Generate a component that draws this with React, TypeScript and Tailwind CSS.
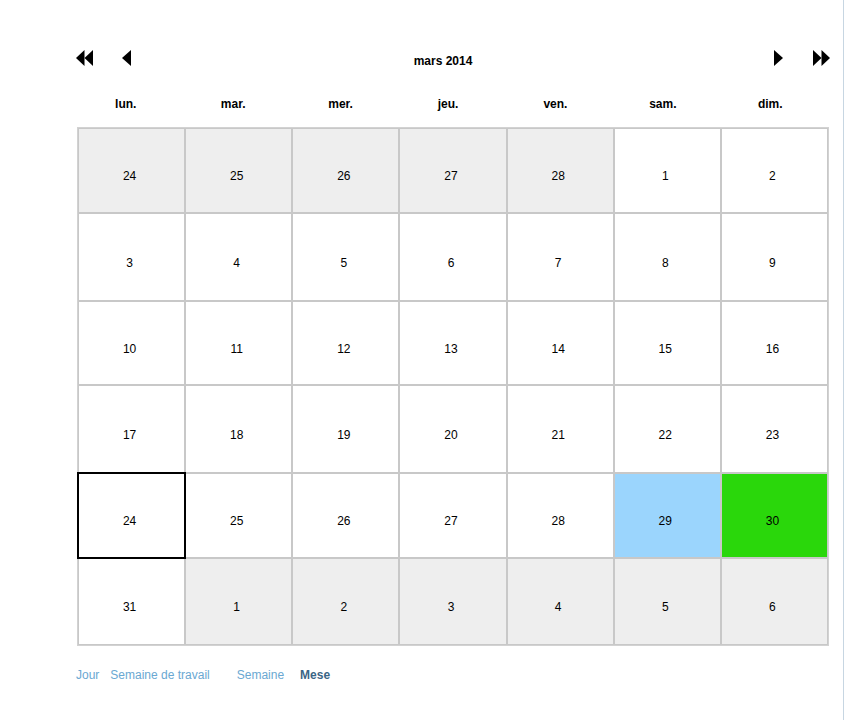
import React from 'react';

// ---------------------------------------------------------------------------
// Data
// ---------------------------------------------------------------------------

type Tone = 'plain' | 'muted' | 'today' | 'blue' | 'green';

interface Day {
  label: number;
  tone: Tone;
}

const WEEKDAYS = ['lun.', 'mar.', 'mer.', 'jeu.', 'ven.', 'sam.', 'dim.'];

const ROW_HEIGHTS = ['h-[85px]', 'h-[88px]', 'h-[84px]', 'h-[88px]', 'h-[85px]', 'h-[87px]'];

const WEEKS: Day[][] = [
  [24, 25, 26, 27, 28].map(n => ({ label: n, tone: 'muted' as Tone })).concat([
    { label: 1, tone: 'plain' },
    { label: 2, tone: 'plain' },
  ]),
  [3, 4, 5, 6, 7, 8, 9].map(n => ({ label: n, tone: 'plain' as Tone })),
  [10, 11, 12, 13, 14, 15, 16].map(n => ({ label: n, tone: 'plain' as Tone })),
  [17, 18, 19, 20, 21, 22, 23].map(n => ({ label: n, tone: 'plain' as Tone })),
  [
    { label: 24, tone: 'today' },
    { label: 25, tone: 'plain' },
    { label: 26, tone: 'plain' },
    { label: 27, tone: 'plain' },
    { label: 28, tone: 'plain' },
    { label: 29, tone: 'blue' },
    { label: 30, tone: 'green' },
  ],
  [{ label: 31, tone: 'plain' as Tone }].concat(
    [1, 2, 3, 4, 5, 6].map(n => ({ label: n, tone: 'muted' as Tone })),
  ),
];

const TONE_STYLES: Record<Tone, string> = {
  plain: 'bg-white',
  muted: 'bg-[#eeeeee]',
  today: 'bg-white outline-2 outline-black -outline-offset-1 z-10',
  blue: 'bg-[#9bd5fd]',
  green: 'bg-[#2ad70b]',
};

// ---------------------------------------------------------------------------
// Icons
// ---------------------------------------------------------------------------

function Arrow({ dir, double }: { dir: 'left' | 'right'; double?: boolean }) {
  const w = double ? 17 : 9;
  const left = double
    ? ['8.5,0 0,8 8.5,16', '17,0 8.5,8 17,16']
    : ['9,0 0,8 9,16'];
  return (
    <svg
      width={w}
      height={16}
      viewBox={`0 0 ${w} 16`}
      className={dir === 'right' ? '-scale-x-100' : ''}
    >
      {left.map(p => (
        <polygon key={p} points={p} fill="#000" />
      ))}
    </svg>
  );
}

// ---------------------------------------------------------------------------
// Component
// ---------------------------------------------------------------------------

export default function App() {
  return (
    <div
      className="w-[844px] h-[720px] border-r border-[#c7d6e2] bg-white text-black"
      style={{ fontFamily: '"Liberation Sans", Arial, sans-serif' }}
    >
      <div className="pl-[76px] pt-[50px] w-[830px]">
        {/* Navigation */}
        <div className="flex items-center h-[16px]">
          <button type="button" className="flex">
            <Arrow dir="left" double />
          </button>
          <button type="button" className="flex ml-[29px]">
            <Arrow dir="left" />
          </button>
          <div className="flex-1 text-center text-[12px] font-bold pr-[19px] pt-[6px]">mars 2014</div>
          <button type="button" className="flex">
            <Arrow dir="right" />
          </button>
          <button type="button" className="flex ml-[30px]">
            <Arrow dir="right" double />
          </button>
        </div>

        {/* Weekday headers */}
        <div className="grid grid-cols-7 w-[752px] -ml-[4px] mt-[31px] h-[14px]">
          {WEEKDAYS.map(d => (
            <div key={d} className="text-center text-[12px] font-bold leading-[14px]">
              {d}
            </div>
          ))}
        </div>

        {/* Month grid */}
        <div className="ml-[1px] mt-[16px] w-[752px] border border-[#d2d2d2]">
          {WEEKS.map((week, r) => (
            <div key={r} className="grid grid-cols-7">
              {week.map((day, c) => (
                <div
                  key={c}
                  className={`relative flex items-center justify-center pt-[11px] pr-[4px] border border-[#c8c8c8] text-[12px] ${ROW_HEIGHTS[r]} ${TONE_STYLES[day.tone]}`}
                >
                  {day.label}
                </div>
              ))}
            </div>
          ))}
        </div>

        {/* View switcher */}
        <div className="flex items-center mt-[22px] text-[12px] text-[#6aa8d2] leading-[14px]">
          <span>Jour</span>
          <span className="ml-[11px]">Semaine de travail</span>
          <span className="ml-[27px]">Semaine</span>
          <span className="ml-[16px] font-bold text-[#3b6585]">Mese</span>
        </div>
      </div>
    </div>
  );
}
